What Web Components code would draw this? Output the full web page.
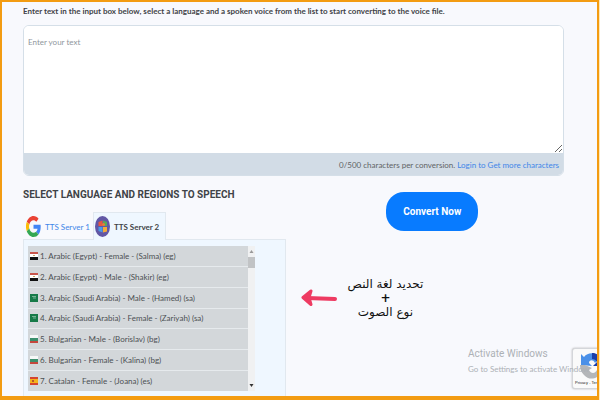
<!DOCTYPE html>
<html lang="en">
<head>
<meta charset="utf-8">
<title>Text to Speech</title>
<style>
  html, body { height: 100%; margin: 0; }
  body {
    font-family: Lato, "Open Sans", sans-serif;
    font-size: 8px;
    line-height: 14px;
    color: #3f4347;
    background: #f8f9fd;
    overflow: hidden;
  }
</style>
</head>
<body>
<tts-page></tts-page>

<script>
const colors = {
  orange: "#f39c12",
  link: "#3f86e8",
  blue: "#087bff",
  footer: "#d2dce6",
  line: "#d5dfe8",
  panel: "#eff7ff",
  row: "#d3d7da"
};

const headingFont = `Roboto, "Open Sans", sans-serif`;

const voices = [
  ["eg", "Arabic (Egypt) - Female - (Salma) (eg)"],
  ["eg", "Arabic (Egypt) - Male - (Shakir) (eg)"],
  ["sa", "Arabic (Saudi Arabia) - Male - (Hamed) (sa)"],
  ["sa", "Arabic (Saudi Arabia) - Female - (Zariyah) (sa)"],
  ["bg", "Bulgarian - Male - (Borislav) (bg)"],
  ["bg", "Bulgarian - Female - (Kalina) (bg)"],
  ["es", "Catalan - Female - (Joana) (es)"]
];

const flags = {
  eg: `<path fill="#c8554b" d="M0 0h8v3H0z"/><path fill="#fff" d="M0 2h8v3H0z"/><path fill="#111" d="M0 5h8v3H0z"/><path fill="#c9a565" d="M3 3h2v1H3z"/>`,
  sa: `<path fill="#167a48" d="M0 0h8v8H0z"/><path stroke="#b9dcc9" stroke-width=".6" d="M2 2.500h4M3 4h3"/>`,
  bg: `<path fill="#f6f8f8" d="M0 0h8v3H0z"/><path fill="#3b8f6d" d="M0 3h8v3H0z"/><path fill="#c5473d" d="M0 6h8v2H0z"/>`,
  es: `<path fill="#d5442e" d="M0 0h8v8H0z"/><path fill="#f5b21b" d="M0 2h8v4H0z"/><path fill="#b6552a" d="M2 3h2v2H2z"/>`
};

class TtsElement extends HTMLElement {
  constructor() {
    super();
    const template = document.createElement("template");
    template.innerHTML = this.getInnerHTML();
    this.attachShadow({ mode: "open" });
    this.shadowRoot.appendChild(template.content.cloneNode(true));
  }
}

class TextEntry extends TtsElement {
  getInnerHTML() {
    return /*html*/ `
    <style>
      :host { display: block; }
      label { display: block; font-weight: bold; padding-bottom: 7px; }
      .box { border: 1px solid ${colors.line}; border-radius: 6px; overflow: hidden; background: #fff; }
      textarea {
        display: block; box-sizing: border-box; width: 100%; height: 127px; padding: 9px 4px;
        border: 0; outline: 0; resize: vertical; font: inherit; background: #fff;
      }
      textarea::placeholder { color: #8f969d; }
      .footer { padding: 5px 4px 3px; text-align: right; background: ${colors.footer}; color: #5f6365; }
      a { color: ${colors.link}; text-decoration: none; }
    </style>
    <label for="text">Enter text in the input box below, select a language and a spoken voice from the list to start converting to the voice file.</label>
    <div class="box">
      <textarea id="text" placeholder="Enter your text"></textarea>
      <div class="footer">0/500 characters per conversion. <a href="#login">Login to Get more characters</a></div>
    </div>`;
  }
}

class ServerTabs extends TtsElement {
  getInnerHTML() {
    return /*html*/ `
    <style>
      :host { display: flex; }
      button {
        display: flex; align-items: center; gap: 4px; height: 28px; padding: 0 2px;
        border: 1px solid transparent; border-bottom: 0; background: none;
        font: inherit; color: ${colors.link};
      }
      button[aria-selected="true"] {
        padding: 0 6px 0 1px; border-color: #e1e8ef; background: ${colors.panel};
        color: #3f4347; font-weight: bold;
      }
      svg { width: 15px; height: 21px; }
    </style>
    <button role="tab" aria-selected="false">
      <svg viewBox="0 0 48 48" preserveAspectRatio="none" aria-hidden="true">
        <path fill="#EA4335" d="M24 9.5c3.5 0 6.700 1.200 9.200 3.600l6.900-6.900C35.900 2.400 30.500 0 24 0 14.600 0 6.500 5.400 2.600 13.200l8 6.200C12.400 13.700 17.700 9.500 24 9.500z"/>
        <path fill="#4285F4" d="M47 24.500c0-1.600-.2-3.100-.4-4.500H24v9h13c-.6 3-2.300 5.500-4.800 7.200l7.700 6C44.400 38 47 31.800 47 24.500z"/>
        <path fill="#FBBC05" d="M10.500 28.600a14.500 14.500 0 0 1 0-9.200l-8-6.200a24 24 0 0 0 0 21.600z"/>
        <path fill="#34A853" d="M24 48c6.500 0 11.900-2.100 15.900-5.800l-7.700-6c-2.200 1.500-5 2.300-8.200 2.300-6.300 0-11.600-4.200-13.500-9.900l-8 6.200C6.500 42.600 14.600 48 24 48z"/>
      </svg>
      <span>TTS Server 1</span>
    </button>
    <button role="tab" aria-selected="true">
      <svg viewBox="0 0 30 42" aria-hidden="true">
        <ellipse cx="15" cy="21" rx="15" ry="21" fill="#6257a5"/>
        <path fill="#e9573f" d="M7 12l8-3v11H7z"/>
        <path fill="#57a85a" d="M16 9l8 3v8h-8z"/>
        <path fill="#4b9ae8" d="M7 22h8v11l-8-3z"/>
        <path fill="#f4aa38" d="M16 22h8v9l-8 2z"/>
        <circle cx="17" cy="17" r="3" fill="#f07735"/>
      </svg>
      <span>TTS Server 2</span>
    </button>`;
  }
}

class VoiceList extends TtsElement {
  getInnerHTML() {
    return /*html*/ `
    <style>
      :host { display: flex; max-width: 227px; height: 145px; }
      ul { flex: 1; display: grid; grid-auto-rows: 1fr; gap: 1px; margin: 0; padding: 0; list-style: none; background: #e6eaed; }
      li { display: flex; }
      button {
        flex: 1; display: flex; align-items: center; gap: 2px; min-width: 0; padding: 0 2px;
        border: 0; background: ${colors.row}; font: inherit; color: #4c5053; white-space: nowrap;
      }
      button svg { width: 8px; height: 8px; }
      .bar { display: flex; flex-direction: column; width: 7px; background: #f0f1f2; }
      .bar svg { width: 7px; height: 11px; }
      .thumb { height: 11px; background: #c1c3c5; }
      .down { margin-top: auto; }
    </style>
    <ul>
      ${voices.map(([code, name], i) => /*html*/ `
      <li><button><svg viewBox="0 0 8 8" aria-hidden="true">${flags[code]}</svg><span>${i + 1}. ${name}</span></button></li>`).join("")}
    </ul>
    <div class="bar">
      <svg viewBox="0 0 7 11"><path fill="#999" d="M1.500 7h4l-2-3z"/></svg>
      <div class="thumb"></div>
      <svg class="down" viewBox="0 0 7 11"><path fill="#333" d="M1.500 4h4l-2 3z"/></svg>
    </div>`;
  }
}

class VoicePicker extends TtsElement {
  getInnerHTML() {
    return /*html*/ `
    <style>
      :host { display: flex; flex-direction: column; }
      h2 { margin: 0 0 9px; font: bold 10px/16px ${headingFont}; white-space: nowrap; }
      server-tabs { margin-bottom: -1px; z-index: 1; }
      .panel { flex: 1; padding: 6px 4px 4px; border: 1px solid #e1e8ef; border-bottom: 0; background: ${colors.panel}; }
    </style>
    <h2>SELECT LANGUAGE AND REGIONS TO SPEECH</h2>
    <server-tabs></server-tabs>
    <div class="panel"><voice-list></voice-list></div>`;
  }
}

class ArabicNote extends TtsElement {
  getInnerHTML() {
    return /*html*/ `
    <style>
      :host { display: flex; align-items: center; gap: 10px; color: #111; }
      svg { width: 36px; height: 18px; }
      p { margin: 0; text-align: center; font: 12px/14px "DejaVu Sans", sans-serif; white-space: nowrap; }
      b { display: block; line-height: 14px; }
    </style>
    <svg viewBox="0 0 36 18" fill="none" stroke="#ee3b62" stroke-linecap="round" stroke-linejoin="round" aria-hidden="true">
      <path stroke-width="4" d="M6 9l28 1"/>
      <path stroke-width="3" fill="#ee3b62" d="M10 2L2 8.500l8 7-2-7z"/>
    </svg>
    <p dir="rtl" lang="ar">تحديد لغة النص<b>+</b>نوع الصوت</p>`;
  }
}

class RecaptchaBadge extends TtsElement {
  getInnerHTML() {
    return /*html*/ `
    <style>
      :host {
        display: block; box-sizing: border-box; width: 60px; height: 41px; padding: 4px 0 0 2px;
        border: 1px solid #d4d6da; border-radius: 3px; background: #fafafa; box-shadow: 0 0 2px #aaa;
      }
      svg { display: block; width: 24px; height: 26px; margin-left: 5px; }
      span { display: block; font: 4px/8px "Liberation Sans", sans-serif; color: #222; white-space: nowrap; }
    </style>
    <svg viewBox="0 0 24 26" aria-hidden="true">
      <path fill="#4a90e8" d="M1 12V1l3 3C8-1 16-1 20 5l-5 5C13 6 9 7 9 10l3 3z"/>
      <path fill="#1c3fa8" d="M12 0c5 0 8 3 9 5l3-3v11H13l4-4c-1-2-3-3-5-3z"/>
      <path fill="#b4b6b8" d="M0 12h5l7 3-3 2c2 4 6 4 8 0h5c-2 8-12 12-18 5C1 19 0 16 0 12z"/>
    </svg>
    <span>Privacy - Ter</span>`;
  }
}

class TtsPage extends TtsElement {
  getInnerHTML() {
    return /*html*/ `
    <style>
      :host {
        display: flex; flex-direction: column; box-sizing: border-box; position: relative;
        height: 100%; margin-right: 1px; padding: 2px 33px 0 21px; overflow: hidden;
        border: 2px solid ${colors.orange}; border-bottom-width: 4px;
        box-shadow: 1px 0 #ffe9b8;
      }
      .lower { flex: 1; display: flex; padding-top: 11px; }
      voice-picker { flex: 263; min-width: 0; }
      .side { flex: 277; min-width: 0; display: flex; flex-direction: column; }
      .convert {
        align-self: center; margin: 5px 0 46px 14px; padding: 0 17px; height: 39px; border: 0; border-radius: 18px;
        background: ${colors.blue}; color: #fff; font: bold 10px/16px ${headingFont}; white-space: nowrap;
      }
      arabic-note { margin-left: 15px; }
      .watermark { position: absolute; right: 8px; bottom: 20px; color: #adb1b6; white-space: nowrap; z-index: 2; }
      .watermark strong { display: block; font: 10px/16px ${headingFont}; }
      recaptcha-badge { position: absolute; right: -35px; bottom: 7px; }
    </style>
    <text-entry></text-entry>
    <div class="lower">
      <voice-picker></voice-picker>
      <div class="side">
        <button class="convert">Convert Now</button>
        <arabic-note></arabic-note>
      </div>
    </div>
    <div class="watermark"><strong>Activate Windows</strong>Go to Settings to activate Window</div>
    <recaptcha-badge></recaptcha-badge>`;
  }
}

const components = {
  "text-entry": TextEntry,
  "server-tabs": ServerTabs,
  "voice-list": VoiceList,
  "voice-picker": VoicePicker,
  "arabic-note": ArabicNote,
  "recaptcha-badge": RecaptchaBadge,
  "tts-page": TtsPage
};
Object.entries(components).forEach(([name, cls]) => customElements.define(name, cls));
</script>
</body>
</html>
